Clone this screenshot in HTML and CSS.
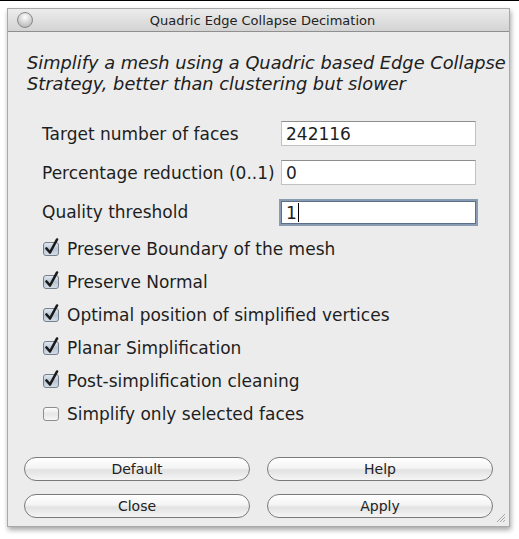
FILE: index.html
```html
<!DOCTYPE html>
<html>
<head>
<meta charset="utf-8">
<link rel="stylesheet" href="styles.css">
</head>
<body>
<div class="topline"></div>
<div class="window">
  <div class="titlebar">
    <span class="closebtn"></span>
    <span class="title">Quadric Edge Collapse Decimation</span>
  </div>
  <div class="content">
    <p class="desc">Simplify a mesh using a Quadric based Edge Collapse<br>Strategy, better than clustering but slower</p>
    <div class="fields">
      <div class="field"><span class="label">Target number of faces</span><span class="input">242116</span></div>
      <div class="field"><span class="label">Percentage reduction (0..1)</span><span class="input">0</span></div>
      <div class="field"><span class="label">Quality threshold</span><span class="input focus">1<span class="caret"></span></span></div>
    </div>
    <div class="checks">
      <div class="check"><svg class="cb" viewBox="0 0 18 18"><use href="#boxon"/></svg><span>Preserve Boundary of the mesh</span></div>
      <div class="check"><svg class="cb" viewBox="0 0 18 18"><use href="#boxon"/></svg><span>Preserve Normal</span></div>
      <div class="check"><svg class="cb" viewBox="0 0 18 18"><use href="#boxon"/></svg><span>Optimal position of simplified vertices</span></div>
      <div class="check"><svg class="cb" viewBox="0 0 18 18"><use href="#boxon"/></svg><span>Planar Simplification</span></div>
      <div class="check"><svg class="cb" viewBox="0 0 18 18"><use href="#boxon"/></svg><span>Post-simplification cleaning</span></div>
      <div class="check"><svg class="cb" viewBox="0 0 18 18"><use href="#boxoff"/></svg><span>Simplify only selected faces</span></div>
    </div>
    <div class="buttons">
      <button class="btn">Default</button>
      <button class="btn">Help</button>
      <button class="btn">Close</button>
      <button class="btn">Apply</button>
    </div>
  </div>
  <svg class="grip" viewBox="0 0 11 11"><path d="M10 2 L2 10 M10 5 L5 10 M10 8 L8 10" stroke="#a8a8a8" stroke-width="1"/></svg>
</div>
<svg width="0" height="0" style="position:absolute">
  <defs>
    <linearGradient id="bg" x1="0" y1="0" x2="0" y2="1">
      <stop offset="0" stop-color="#ffffff"/>
      <stop offset="0.5" stop-color="#e6e6e6"/>
      <stop offset="1" stop-color="#f8f8f8"/>
    </linearGradient>
    <linearGradient id="bgon" x1="0" y1="0" x2="0" y2="1">
      <stop offset="0" stop-color="#e4eaf2"/>
      <stop offset="0.5" stop-color="#b9c5d5"/>
      <stop offset="1" stop-color="#d6dfea"/>
    </linearGradient>
    <g id="boxoff">
      <rect x="1.5" y="4.5" width="15" height="13" rx="2.5" fill="url(#bg)" stroke="#8e8e8e"/>
    </g>
    <g id="boxon">
      <rect x="1.5" y="4.5" width="15" height="13" rx="2.5" fill="url(#bgon)" stroke="#767f8c"/>
      <path d="M4.5 10.5 L8 14.5 L15 1.5" fill="none" stroke="#1a1a1a" stroke-width="2.6" stroke-linejoin="round" stroke-linecap="round"/>
    </g>
  </defs>
</svg>
</body>
</html>
```
FILE: styles.css
```css
html, body { margin: 0; padding: 0; background: #ffffff; }
body { width: 519px; height: 539px; overflow: hidden; font-family: "DejaVu Sans", sans-serif; color: #1e1e1e; }
.topline { height: 1px; background: #000; }
.window {
  position: relative;
  margin: 7px 0 0 7px;
  width: 501px;
  height: 517px;
  background: #ececec;
  border: 1px solid #a9a9a9;
  box-shadow: 1px 3px 5px rgba(0,0,0,0.35);
  display: flex;
  flex-direction: column;
}
.titlebar {
  position: relative;
  height: 22px;
  border-bottom: 1px solid #8f8f8f;
  background: linear-gradient(#ececec, #d3d3d3);
  display: flex;
  align-items: center;
  justify-content: center;
}
.closebtn {
  position: absolute;
  left: 9px;
  top: 3px;
  width: 14px;
  height: 14px;
  border-radius: 50%;
  border: 1px solid #8a8a8a;
  background: radial-gradient(circle at 50% 30%, #ffffff 0%, #d8d8d8 45%, #a8a8a8 100%);
}
.title { font-size: 13px; color: #222; margin-left: 8px; }
.content { padding: 20px 6px 0 19px; display: flex; flex-direction: column; }
.desc { margin: 0; font-style: italic; font-size: 17.8px; line-height: 21px; color: #202020; white-space: nowrap; }
.fields { margin-top: 27px; margin-left: 15px; display: flex; flex-direction: column; gap: 14px; }
.field { display: flex; align-items: center; height: 25px; }
.label { width: 239px; font-size: 17px; }
.input {
  box-sizing: border-box;
  width: 195px;
  height: 25px;
  background: #fff;
  border: 1px solid #c2c2c2;
  border-top-color: #8e8e8e;
  font-size: 17px;
  line-height: 20px;
  padding: 2px 0 0 4px;
  display: flex;
  align-items: flex-start;
}
.input.focus {
  height: 23px;
  margin-top: 2px;
  border: 1px solid #5d6f88;
  box-shadow: 0 0 0 2px #8a9bb4;
  padding-top: 1px;
}
.caret { display: inline-block; width: 1px; height: 19px; background: #000; margin-left: 1px; }
.checks { margin-top: 8px; margin-left: 15px; display: flex; flex-direction: column; }
.check { display: flex; align-items: center; height: 33px; font-size: 17px; }
.cb { width: 18px; height: 18px; margin-right: 7px; margin-top: -4px; }
.buttons {
  margin-top: 27px;
  margin-left: -3px;
  display: grid;
  grid-template-columns: 226px 226px;
  column-gap: 17px;
  row-gap: 13px;
}
.btn {
  height: 24px;
  border-radius: 12px;
  border: 1px solid #7a7a7a;
  background: linear-gradient(#ffffff 0%, #f4f4f4 45%, #e2e2e2 55%, #f5f5f5 100%);
  font-family: "DejaVu Sans", sans-serif;
  font-size: 14px;
  color: #222;
  padding: 0;
}
.grip { position: absolute; right: 3px; bottom: 3px; width: 11px; height: 11px; }
```
